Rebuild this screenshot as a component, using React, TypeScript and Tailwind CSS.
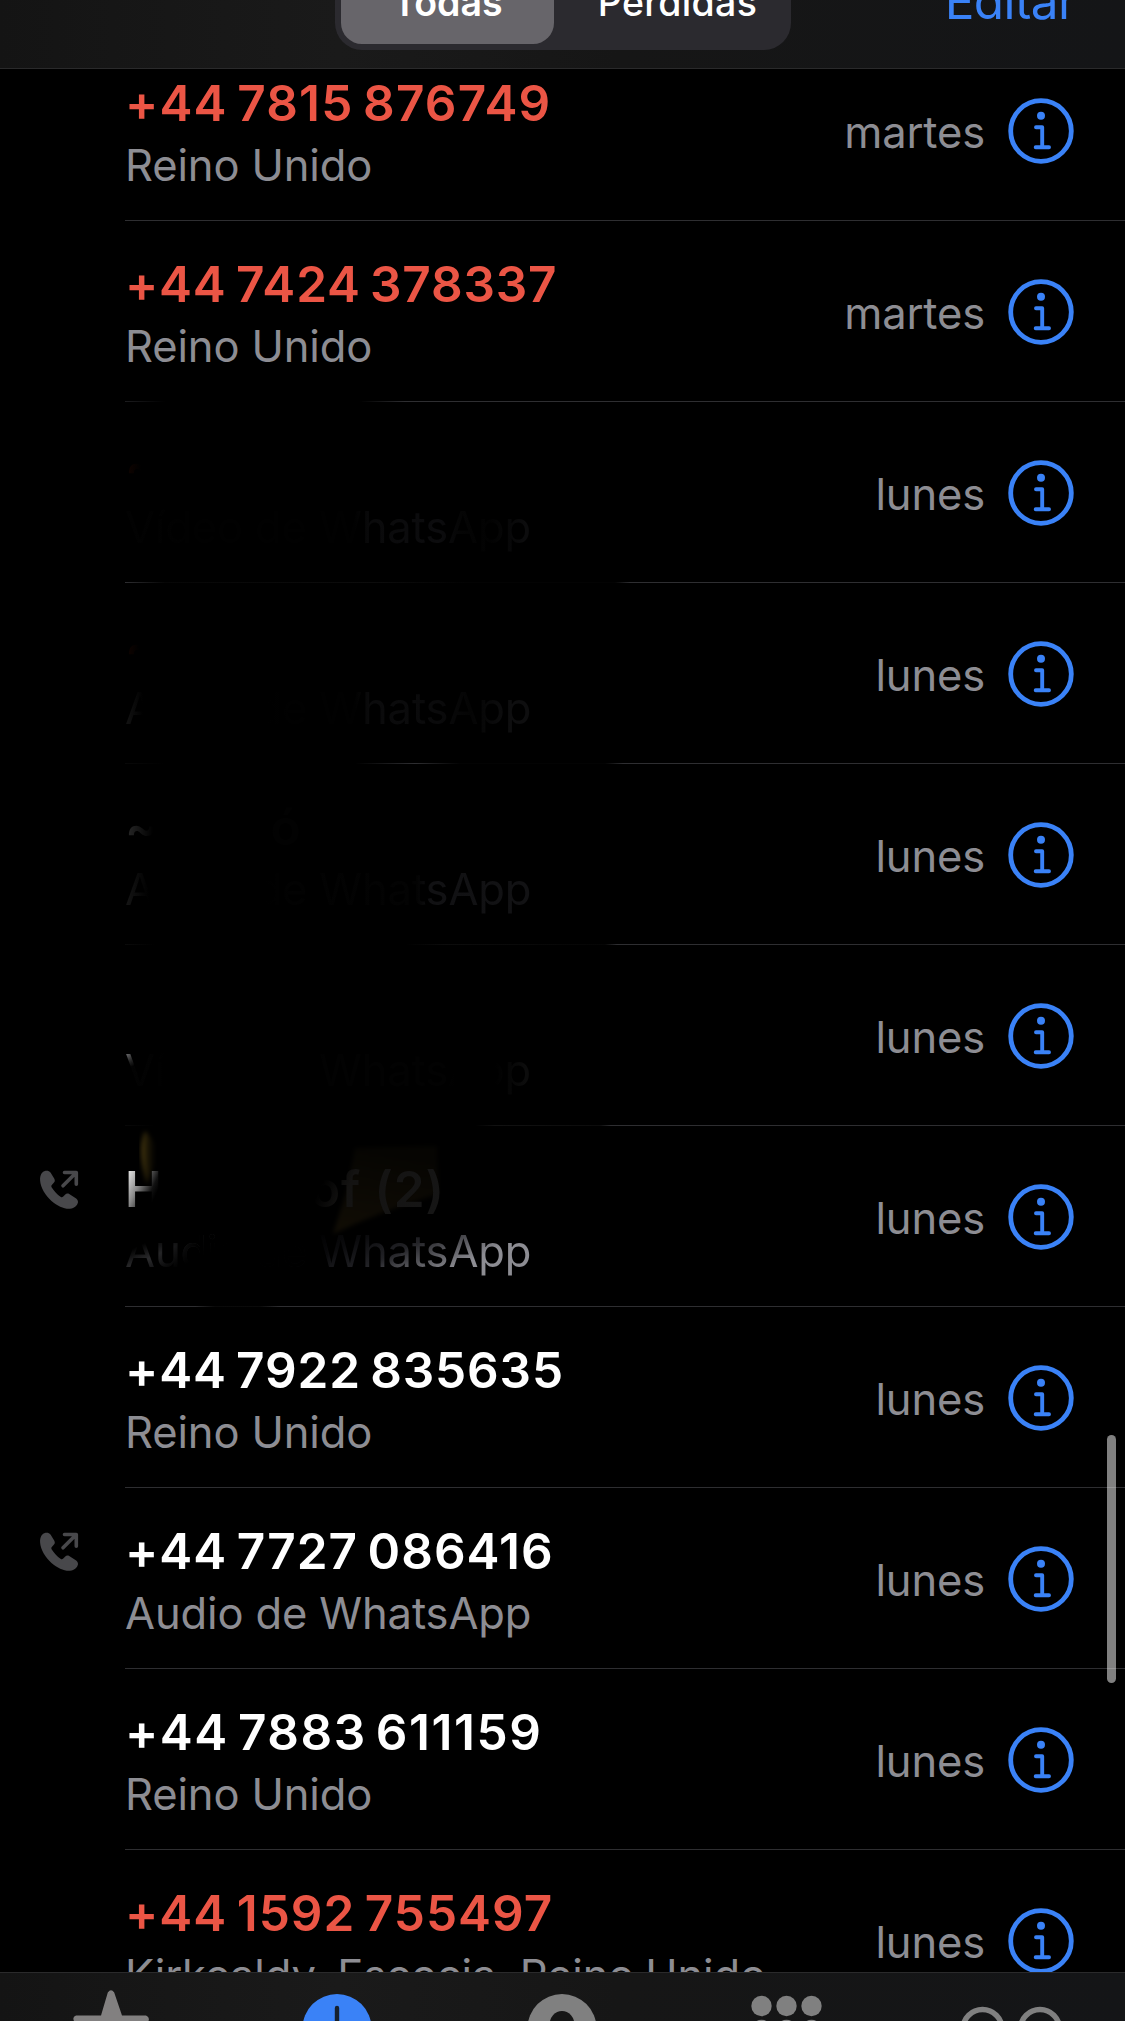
const BAR = "bg-[linear-gradient(90deg,#141414_0%,#1a1a1a_30%,#161616_55%,#141517_100%)]";

type Call = {
  name: string;
  detail: string;
  day: string;
  nameClass?: string;
  detailClass?: string;
  lineClass?: string;
  outgoing?: boolean;
  smudge?: boolean;
};

const LINE = "bg-[#2e2e31]";

const calls: Call[] = [
  {
    name: "+44 7815 876749",
    detail: "Reino Unido",
    day: "martes",
    nameClass: "text-[#eb5545] tracking-[1.15px] [word-spacing:-4px]",
  },
  {
    name: "+44 7424 378337",
    detail: "Reino Unido",
    day: "martes",
    nameClass: "text-[#eb5545] tracking-[0.8px] [word-spacing:-4px]",
    lineClass: "bg-[linear-gradient(90deg,#1c1c1e_0px,#000_40px,#000_235px,#2e2e31_280px)]",
  },
  {
    name: "~",
    detail: "Vídeo de WhatsApp",
    day: "lunes",
    nameClass: "text-transparent bg-clip-text bg-[linear-gradient(90deg,#120400_0px,#000_16px)]",
    detailClass:
      "text-transparent bg-clip-text bg-[linear-gradient(90deg,#020202_0px,#010101_60px,#010101_230px,#0a0a0b_245px,#0c0c0e_315px,#050505_335px,#020202_365px,#0c0c0d_400px)]",
    lineClass: "bg-[linear-gradient(90deg,#2e2e31_0px,#060606_40px,#0c0c0c_250px,#030303_340px,#030303_490px,#2e2e31_505px)]",
  },
  {
    name: "~",
    detail: "Audio de WhatsApp",
    day: "lunes",
    nameClass: "text-transparent bg-clip-text bg-[linear-gradient(90deg,#120400_0px,#000_14px)]",
    detailClass:
      "text-transparent bg-clip-text bg-[linear-gradient(90deg,#141414_0px,#000_18px,#000_140px,#010101_165px,#010101_230px,#0b0b0c_245px,#0a0a0b_315px,#040404_345px,#0e0e0f_385px)]",
    lineClass: "bg-[linear-gradient(90deg,#080808_0px,#000_40px,#000_230px,#2e2e31_290px,#030303_335px,#030303_480px,#2e2e31_498px)]",
  },
  {
    name: "~         ó",
    detail: "Audio de WhatsApp",
    day: "lunes",
    nameClass: "whitespace-pre text-transparent bg-clip-text bg-[linear-gradient(90deg,#2a2a2a_0px,#000_28px,#000_130px,#020202_150px)]",
    detailClass:
      "text-transparent bg-clip-text bg-[linear-gradient(90deg,#161616_0px,#000_24px,#000_140px,#020202_165px,#030303_292px,#111113_305px,#121214_400px)]",
    lineClass: "bg-[linear-gradient(90deg,#0a0a0a_0px,#000_30px,#000_280px,#0c0c0c_320px,#050505_480px,#2e2e31_492px)]",
  },
  {
    name: "",
    detail: "Vídeo de WhatsApp",
    day: "lunes",
    detailClass:
      "text-transparent bg-clip-text bg-[radial-gradient(circle_at_1px_12px,#77777a_0px,#2a2a2a_9px,transparent_16px),linear-gradient(90deg,#030303_0px,#020202_30px,#000_40px,#000_180px,#020202_200px,#020202_320px,#000_330px,#000_370px,#0c0c0c_400px)]",
    lineClass: "bg-[linear-gradient(90deg,#080808_0px,#000_30px,#000_350px,#111_370px,#0c0c0c_475px,#2e2e31_486px)]",
  },
  {
    name: "H           of (2)",
    detail: "Audio de WhatsApp",
    day: "lunes",
    outgoing: true,
    smudge: true,
    nameClass:
      "whitespace-pre tracking-[0.9px] text-transparent bg-clip-text bg-[linear-gradient(115deg,#ddd_10px,#888_24px,#111_38px,#000_44px,#000_190px,#141312_215px,#161616_320px)]",
    detailClass:
      "text-transparent bg-clip-text bg-[linear-gradient(90deg,transparent_0px,transparent_30px,#000_75px,#000_180px,transparent_205px),linear-gradient(155deg,#000_0px,#000_28px,#2a2a2c_44px,#000_66px,#000_85px,#0a0a0c_115px,#222226_143px,#8d8d93_182px)]",
    lineClass: "bg-[linear-gradient(90deg,#2e2e31_0px,#2e2e31_70px,#090909_90px,#0a0a0a_135px,#2e2e31_155px)]",
  },
  {
    name: "+44 7922 835635",
    detail: "Reino Unido",
    day: "lunes",
    nameClass: "text-white tracking-[0.85px] [word-spacing:-4px]",
  },
  {
    name: "+44 7727 086416",
    detail: "Audio de WhatsApp",
    day: "lunes",
    outgoing: true,
    nameClass: "text-white tracking-[1px] [word-spacing:-4px]",
  },
  {
    name: "+44 7883 611159",
    detail: "Reino Unido",
    day: "lunes",
    nameClass: "text-white tracking-[1.55px] [word-spacing:-5px]",
  },
  {
    name: "+44 1592 755497",
    detail: "Kirkcaldy, Escocia, Reino Unido",
    day: "lunes",
    nameClass: "text-[#eb5545] tracking-[1px] [word-spacing:-4px]",
    detailClass: "text-[#8d8d93] [word-spacing:-1px]",
  },
];

function InfoIcon() {
  return (
    <svg viewBox="0 0 66 66" className="mt-px h-[66px] w-[66px] shrink-0" fill="none">
      <circle cx="33" cy="33" r="30.3" stroke="#3a82f7" strokeWidth="4.8" />
      <circle cx="33" cy="17.8" r="4" fill="#3a82f7" />
      <path d="M28 29.3H34.2V49.2M27.7 49.3H41" stroke="#3a82f7" strokeWidth="3.9" strokeLinecap="round" strokeLinejoin="round" />
    </svg>
  );
}

function OutgoingIcon() {
  return (
    <svg viewBox="0 0 40 40" className="h-10 w-10" fill="none">
      <path
        d="M6.5 0.8C3 1.5 0.8 5 1.1 10.5C1.6 18 6.5 25.5 12.5 31C18.5 36 25 39.2 31 38.8C35.5 38.3 38.5 35 39 32.2C39.1 30.5 38.2 29.2 36.8 28.2L30.2 24C28.6 23.2 27.2 23.6 26 24.8L24 26.8C23.2 27.4 22.5 27.4 21.5 26.7C18.5 24.7 14.5 20.5 12.6 17.2C12.1 16.2 12.3 15.6 13 14.8L15 12.6C16 11.3 16.1 10 15.2 8.4L11.5 2.6C10.2 0.9 8.5 0.3 6.5 0.8Z"
        fill="#48484b"
      />
      <path d="M25.5 2.5H37.3V14.2M37 2.8L24 15.8" stroke="#48484b" strokeWidth="3.6" strokeLinecap="round" strokeLinejoin="round" />
    </svg>
  );
}

function Smudge() {
  return (
    <svg viewBox="0 0 340 150" className="absolute left-0 top-0 h-[150px] w-[340px]">
      <defs>
        <filter id="soft" colorInterpolationFilters="sRGB">
          <feGaussianBlur stdDeviation="2" />
        </filter>
        <linearGradient id="spark" x1="0" x2="1">
          <stop offset="0" stopColor="#4a3b10" />
          <stop offset="0.4" stopColor="#1e1806" />
          <stop offset="1" stopColor="#000" />
        </linearGradient>
        <linearGradient id="patch" x1="0.2" x2="0" y1="0" y2="1">
          <stop offset="0" stopColor="#060502" />
          <stop offset="1" stopColor="#110d05" />
        </linearGradient>
      </defs>
      <path d="M20 5C14 16 15 38 22 58C26 45 40 24 20 5Z" fill="url(#spark)" filter="url(#soft)" />
      <path d="M230 22L312 20L313 68Q258 84 208 108L222 64Z" fill="url(#patch)" filter="url(#soft)" />
    </svg>
  );
}

function CallRow({ call }: { call: Call }) {
  return (
    <div className="flex h-[181px] shrink-0">
      <div className="w-[125px] pl-[39px] pt-[44px]">{call.outgoing && <OutgoingIcon />}</div>
      <div className="relative flex flex-1 flex-col">
        {call.smudge && <Smudge />}
        <div className="relative flex flex-1 items-center">
          <div className="flex-1 whitespace-nowrap pt-[5px]">
            <div className={`h-[64px] w-fit text-[49.5px] font-semibold leading-[64px] ${call.nameClass ?? ""}`}>{call.name}</div>
            <div
              className={`h-[60px] w-fit text-[43.5px] leading-[60px] tracking-[-0.13px] ${call.detailClass ?? "text-[#8d8d93]"}`}
            >
              {call.detail}
            </div>
          </div>
          <div className="flex items-center gap-[23px] pr-[51px]">
            <span className="pt-[3px] text-[43.5px] leading-[60px] tracking-[-0.15px] text-[#8d8d93]">{call.day}</span>
            <InfoIcon />
          </div>
        </div>
        <div className={`h-px ${call.lineClass ?? LINE}`} />
      </div>
    </div>
  );
}

export default function App() {
  return (
    <div className="relative flex h-[2021px] w-[1125px] flex-col overflow-hidden bg-black font-['Inter','Liberation_Sans',sans-serif]">
      {/* Header */}
      <header className={`flex h-[69px] shrink-0 justify-end border-b border-[#2a2a2b] ${BAR}`}>
        <div className="-mt-[46px] flex h-24 w-[456px] rounded-[27px] bg-[#2b2a2f] p-[6px] text-[37.5px] leading-none text-white">
          <div className="flex w-[213px] items-center justify-center rounded-[21px] bg-[#67656a] pt-[2px] font-semibold">Todas</div>
          <div className="flex flex-1 items-center justify-center pl-4 pt-[2px] font-medium tracking-[0.3px]">Perdidas</div>
        </div>
        <div className="-mt-[41px] w-[334px] pr-[49px] text-right text-[49.5px] leading-[84px] tracking-[-0.6px] text-[#3a82f7]">
          Editar
        </div>
      </header>

      {/* Calls */}
      <main className="flex flex-1 flex-col overflow-hidden">
        <div className="-mt-[29px]">
          {calls.map((call, i) => (
            <CallRow key={i} call={call} />
          ))}
        </div>
      </main>

      {/* Tabs */}
      <footer className={`grid h-[49px] shrink-0 grid-cols-5 overflow-hidden border-t border-[#2a2a2b] ${BAR}`}>
        <svg viewBox="0 0 225 80" className="h-20 w-[225px]">
          <path
            d="M107.8 19.5Q111 15 114.2 19.5L122 42.5H146Q150 44 148.5 48L129 63L136 80H86L93 63L74 48Q72 44 76 42.5H101Z"
            fill="#828080"
          />
        </svg>
        <svg viewBox="0 0 225 80" className="h-20 w-[225px]">
          <circle cx="112" cy="55.5" r="34.5" fill="#3a82f7" />
          <path d="M112 35V56" stroke="#16202e" strokeWidth="4.4" strokeLinecap="round" />
        </svg>
        <svg viewBox="0 0 225 80" className="h-20 w-[225px]">
          <circle cx="112" cy="55.5" r="34.5" fill="#808080" />
          <ellipse cx="112" cy="52" rx="12.5" ry="14" fill="#161616" />
        </svg>
        <svg viewBox="0 0 225 80" className="h-20 w-[225px]" fill="#808080">
          {[86.5, 111.5, 136.5].map((x) => (
            <g key={x}>
              <circle cx={x} cy="33" r="10.2" />
              <circle cx={x} cy="57" r="10.2" />
            </g>
          ))}
        </svg>
        <svg viewBox="0 0 225 80" className="h-20 w-[225px]" fill="none" stroke="#808080" strokeWidth="5.5">
          <circle cx="82.5" cy="56" r="19.5" />
          <circle cx="140" cy="56" r="19.5" />
        </svg>
      </footer>

      {/* Scroll indicator */}
      <div className="absolute left-[1107px] top-[1435px] h-[248px] w-[9px] rounded-full bg-white/50" />
    </div>
  );
}
